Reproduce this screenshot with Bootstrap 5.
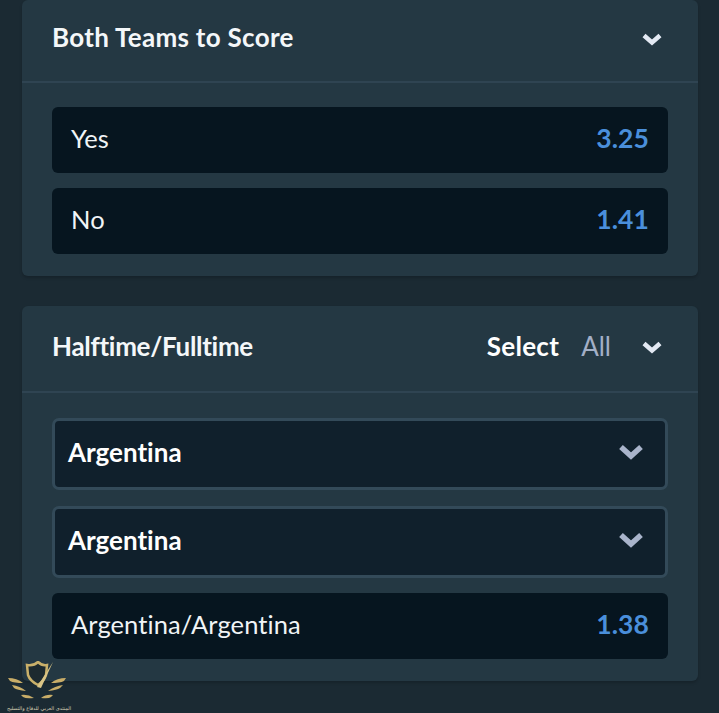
<!DOCTYPE html>
<html lang="en">
<head>
    <meta charset="UTF-8" />
    <title>Match markets</title>
    <link href="https://cdn.jsdelivr.net/npm/bootstrap@5.3.3/dist/css/bootstrap.min.css" rel="stylesheet">
    <style>
        html, body {
            height: 713px;
            overflow: hidden;
        }

        body {
            background: #1b2a33;
            font-family: Lato, "Open Sans", sans-serif;
            font-variant-ligatures: none;
            color: #fff;
            position: relative;
        }

        .page-wrap {
            padding: 0 21px 0 22px;
        }

        .market {
            background: #243843;
            border-radius: 6px;
            box-shadow: 0 2px 3px rgba(0, 0, 0, .18);
            margin-bottom: 30px;
        }

        .market-head {
            height: 81px;
            padding: 0 35px 0 30px;
            border-bottom: 2px solid #2f4452;
            box-sizing: content-box;
        }

        .market-head.second {
            height: 85px;
        }

        .market-title {
            font-size: 26px;
            font-weight: 700;
            color: #f4f7f9;
            letter-spacing: .3px;
            padding-bottom: 7px;
        }

        .second .market-title {
            letter-spacing: -.3px;
        }

        .second .market-title, .second .head-select, .second .head-all {
            padding-bottom: 4px;
        }

        .head-select {
            font-size: 26px;
            font-weight: 700;
            letter-spacing: .3px;
            margin-right: 22px;
        }

        .head-all {
            font-size: 26px;
            color: #a3afc6;
            margin-right: 30px;
        }

        .market-chevron {
            margin-bottom: 3px;
        }

        .market-body {
            padding: 24px 30px 22px;
        }

        .second + .market-body {
            padding-top: 25px;
        }

        .gap-row {
            gap: 15px;
        }

        .odd-row {
            height: 66px;
            background: #06151f;
            border-radius: 6px;
            padding: 0 19px 2px 19px;
            font-size: 25.500px;
            letter-spacing: .1px;
            color: #f0f4f6;
        }

        .odd-label {
            margin-bottom: 2px;
        }

        .odd-value {
            color: #4a8fdb;
            font-size: 26.500px;
            font-weight: 700;
        }

        .pick-box {
            height: 72px;
            background: #10202c;
            border: 3px solid #334a59;
            border-radius: 7px;
            padding: 0 21px 4px 13px;
            font-size: 26px;
            font-weight: 700;
        }

        .pick-box + .pick-box {
            margin-top: 1px;
        }

        .pick-chevron {
            margin-bottom: 1px;
        }

        .watermark {
            position: absolute;
            left: 6px;
            bottom: 1px;
            width: 66px;
        }

        .watermark-text {
            font-family: "DejaVu Sans", sans-serif;
            font-size: 5px;
            line-height: 7px;
            color: #d9d2b8;
            white-space: nowrap;
        }
    </style>
</head>
<body>

    <div class="page-wrap">
        <section class="market">
            <div class="market-head d-flex justify-content-between align-items-center">
                <span class="market-title">Both Teams to Score</span>
                <svg class="market-chevron" width="22" height="14" viewBox="0 0 22 14"><path d="M3 3.500 11 10.500 19 3.500" fill="none" stroke="#e3e9f3" stroke-width="4.500"/></svg>
            </div>
            <div class="market-body d-flex flex-column gap-row">
                <div class="odd-row d-flex justify-content-between align-items-center">
                    <span class="odd-label">Yes</span><span class="odd-value">3.25</span>
                </div>
                <div class="odd-row d-flex justify-content-between align-items-center">
                    <span class="odd-label">No</span><span class="odd-value">1.41</span>
                </div>
            </div>
        </section>

        <section class="market">
            <div class="market-head second d-flex align-items-center">
                <span class="market-title me-auto">Halftime/Fulltime</span>
                <span class="head-select">Select</span>
                <span class="head-all">All</span>
                <svg class="market-chevron" width="22" height="14" viewBox="0 0 22 14"><path d="M3 3.500 11 10.500 19 3.500" fill="none" stroke="#e3e9f3" stroke-width="4.500"/></svg>
            </div>
            <div class="market-body d-flex flex-column gap-row">
                <div class="pick-box d-flex justify-content-between align-items-center">
                    <span>Argentina</span>
                    <svg class="pick-chevron" width="26" height="18" viewBox="0 0 26 18"><path d="M3 4 13 13 23 4" fill="none" stroke="#a9b4cb" stroke-width="5.500"/></svg>
                </div>
                <div class="pick-box d-flex justify-content-between align-items-center">
                    <span>Argentina</span>
                    <svg class="pick-chevron" width="26" height="18" viewBox="0 0 26 18"><path d="M3 4 13 13 23 4" fill="none" stroke="#a9b4cb" stroke-width="5.500"/></svg>
                </div>
                <div class="odd-row d-flex justify-content-between align-items-center">
                    <span class="odd-label">Argentina/Argentina</span><span class="odd-value">1.38</span>
                </div>
            </div>
        </section>
    </div>

    <div class="watermark d-flex flex-column align-items-center">
        <svg width="62" height="44" viewBox="0 0 62 44">
            <path d="M19 4 Q26 5 30 1 Q34 5 39 4 L38 14 Q36 20 30 24 Q22 20 20 14 Z" fill="#1d2a2f" stroke="#c9b06a" stroke-width="2.500"/>
            <path d="M29 26 L45 1 L33 27 Z" fill="#d9c486"/>
            <path d="M0 17 Q9 17 15 22 Q6 22 2 20 Z M4 24 Q12 25 18 30 Q9 29 6 27 Z M13 34 Q20 33 26 37 Q18 38 15 36 Z" fill="#c9ad68"/>
            <path d="M58 17 Q49 17 43 22 Q52 22 56 20 Z M55 24 Q47 25 40 30 Q49 29 52 27 Z M45 34 Q38 33 33 37 Q41 38 43 36 Z" fill="#c9ad68"/>
        </svg>
        <div class="watermark-text" dir="rtl">المنتدى العربي للدفاع والتسليح</div>
    </div>

    <script src="https://cdn.jsdelivr.net/npm/bootstrap@5.3.3/dist/js/bootstrap.bundle.min.js"></script>
</body>
</html>
